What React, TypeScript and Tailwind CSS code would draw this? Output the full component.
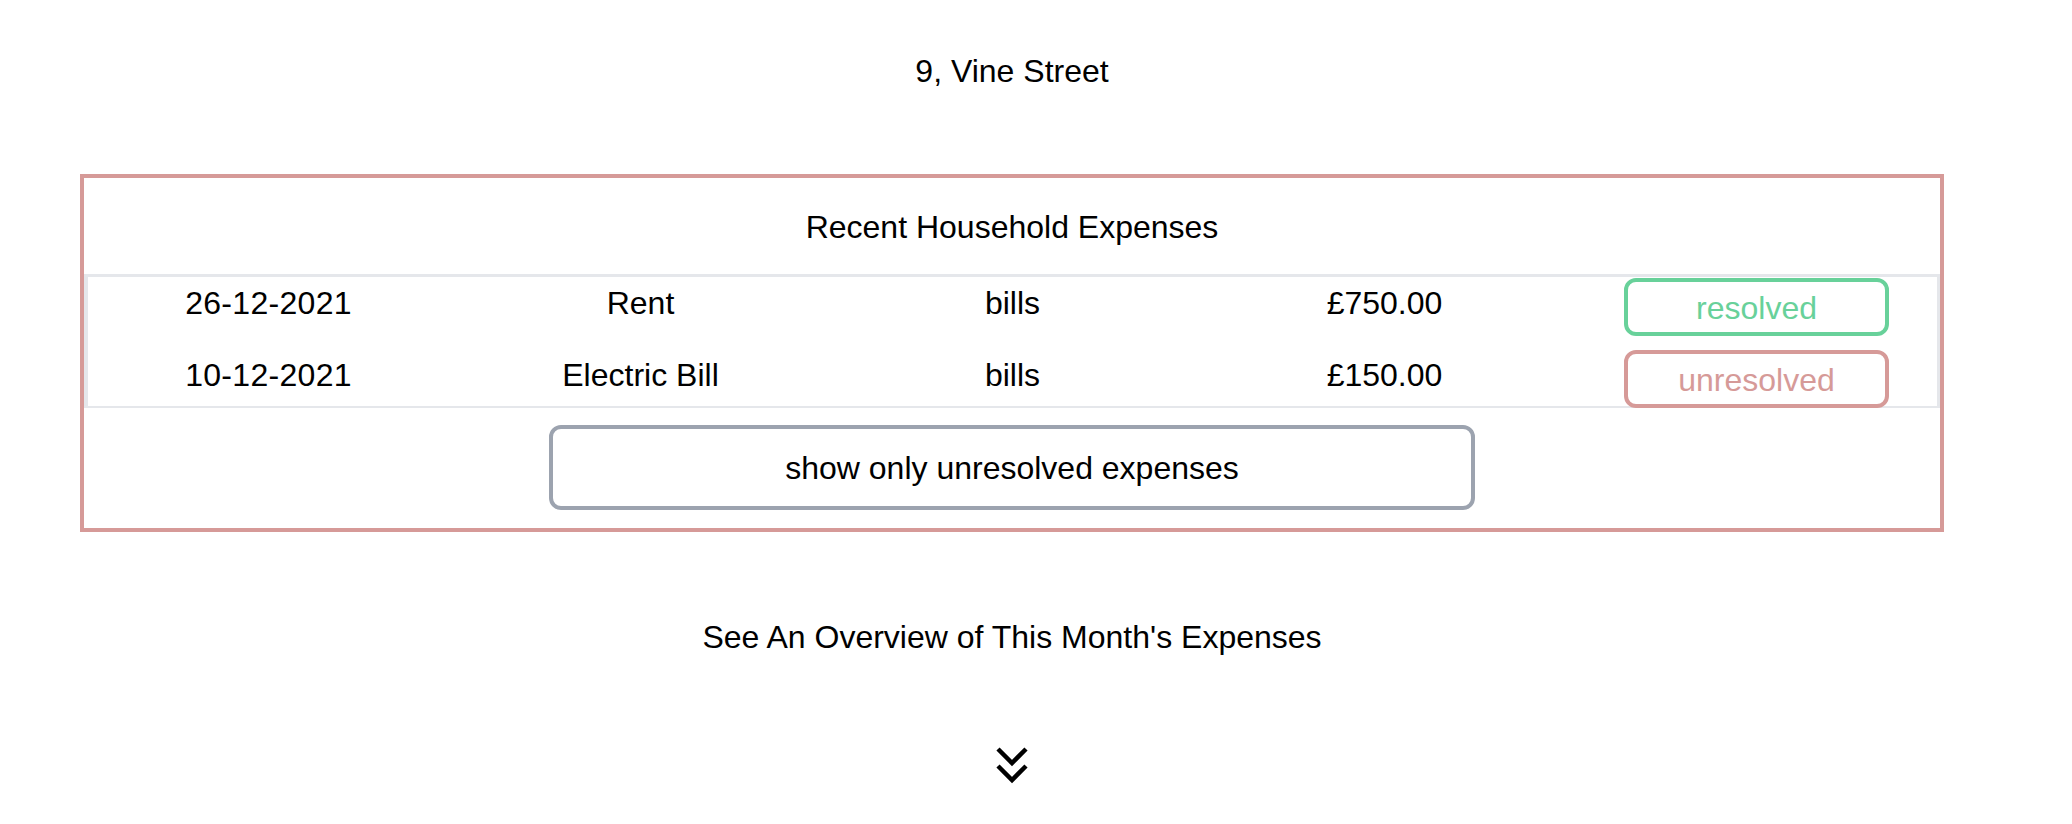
import React from 'react';

type Expense = {
  date: string;
  title: string;
  category: string;
  amount: string;
  resolved: boolean;
};

const expenses: Expense[] = [
  { date: '26-12-2021', title: 'Rent', category: 'bills', amount: '£750.00', resolved: true },
  { date: '10-12-2021', title: 'Electric Bill', category: 'bills', amount: '£150.00', resolved: false },
];

function StatusBadge({ resolved }: { resolved: boolean }) {
  return (
    <span
      className={
        resolved
          ? 'mx-auto flex h-full w-[265px] items-center justify-center rounded-[12px] border-4 border-[#68d19a] pt-[2px] text-[#68d19a]'
          : 'mx-auto flex h-full w-[265px] items-center justify-center rounded-[12px] border-4 border-[#d69a98] pt-[2px] text-[#d69a98]'
      }>
      {resolved ? 'resolved' : 'unresolved'}
    </span>
  );
}

function ChevronsDown() {
  return (
    <svg width="34" height="38" viewBox="0 0 34 38" className="mx-auto block" fill="none">
      <polyline points="3,3 17,17 31,3" stroke="#000" strokeWidth="4.5" />
      <polyline points="3,20 17,34 31,20" stroke="#000" strokeWidth="4.5" />
    </svg>
  );
}

export default function App() {
  return (
    <div className="min-h-screen bg-white">
      <div className="w-[2024px] pt-[47px] text-center font-['Liberation_Sans',Arial,sans-serif] text-[32px] leading-[48px] text-black">
        <h1>9, Vine Street</h1>

        {/* Recent expenses */}
        <section className="mx-20 mt-[79px] border-4 border-[#d69a98] pt-[25px] pb-[18px]">
          <h2>Recent Household Expenses</h2>

          <div className="mt-[23px] flex flex-col gap-[17px] border-t-[3px] border-r-[3px] border-b-2 border-l-4 border-[#e5e7eb] pt-px">
            {expenses.map((e, i) => (
              <div
                key={e.date}
                className={
                  i === 0
                    ? 'grid h-[55px] grid-cols-[repeat(5,372px)] items-center justify-center'
                    : 'grid h-[56px] grid-cols-[repeat(5,372px)] items-center justify-center'
                }>
                <span className="pb-[8px] tracking-[0.3px]">{e.date}</span>
                <span className="pb-[8px]">{e.title}</span>
                <span className="pb-[8px]">{e.category}</span>
                <span className="pb-[8px]">{e.amount}</span>
                <StatusBadge resolved={e.resolved} />
              </div>
            ))}
          </div>

          <button className="mx-auto mt-[17px] block h-[85px] w-[926px] rounded-[12px] border-4 border-[#9ca3af] bg-white">
            show only unresolved expenses
          </button>
        </section>

        <p className="mt-[81px]">See An Overview of This Month's Expenses</p>

        <div className="mt-[85px]">
          <ChevronsDown />
        </div>
      </div>
    </div>
  );
}
